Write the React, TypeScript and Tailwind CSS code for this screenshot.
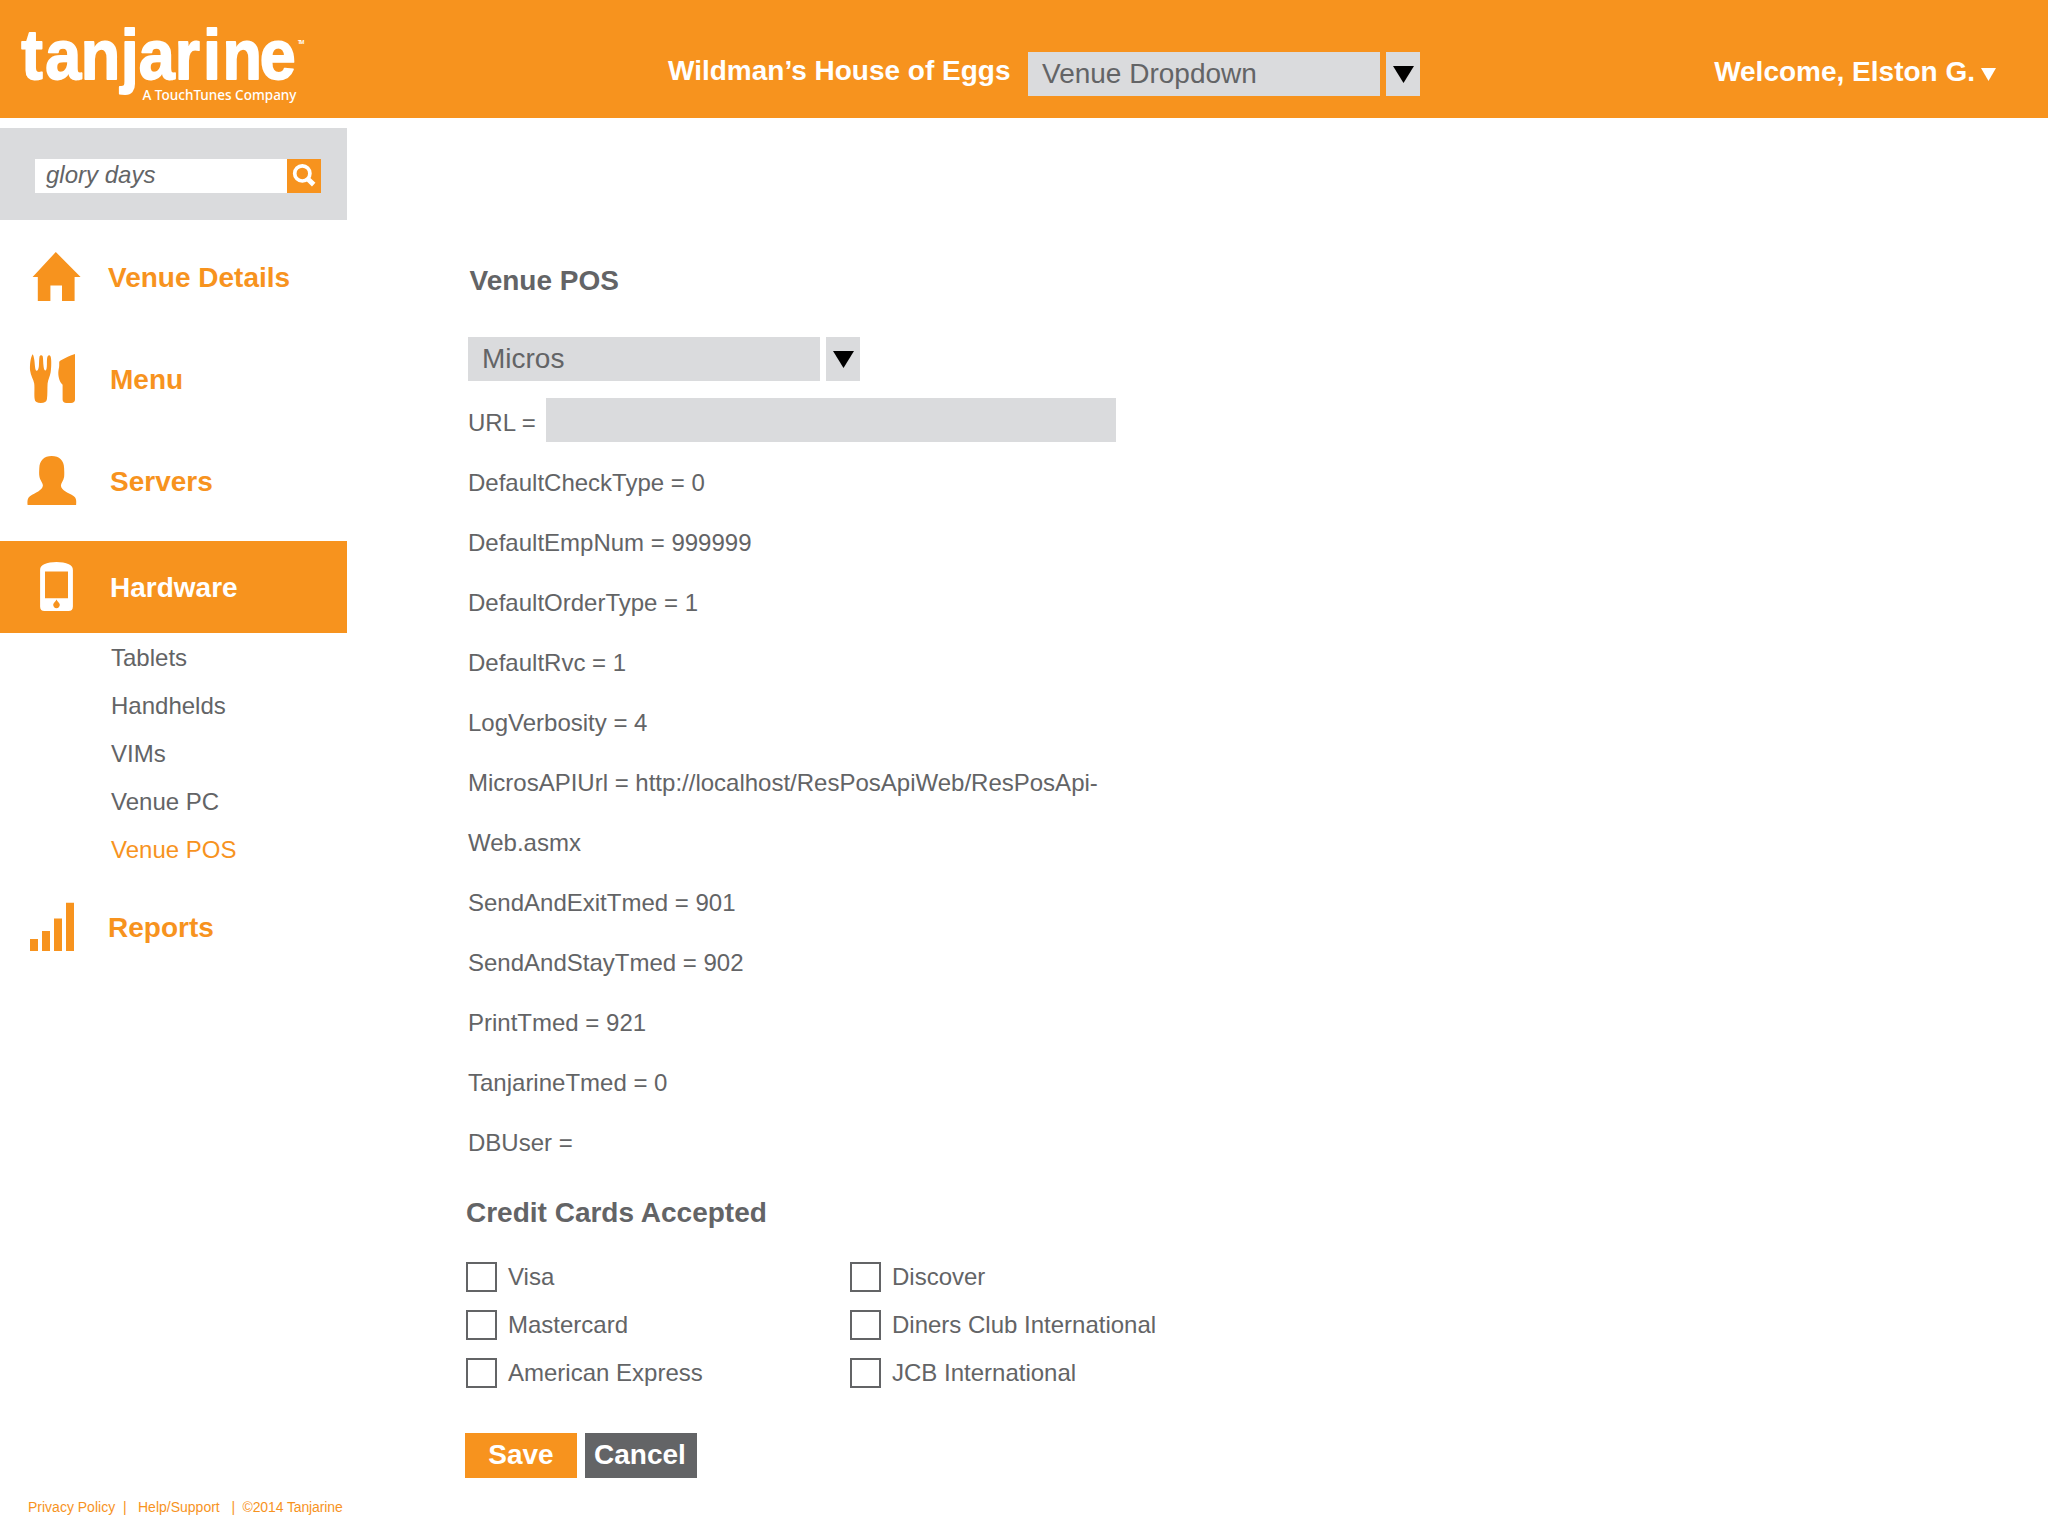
import React from 'react';

const ICON = 'mb-[2px] h-[49px] w-14 shrink-0';

const HouseIcon = () => (
    <svg viewBox="0 0 56 49" className={ICON} fill="currentColor">
        <path d="M29.8 0L54.6 25H48.6V49H36V33.5H24.4V49H11.8V25H6.6Z" />
    </svg>
);

const CutleryIcon = () => (
    <svg viewBox="0 0 56 49" className={ICON} fill="currentColor">
        <path d="M6.6 0.3C8 2 8.6 7 9 12.5C9.2 15 9.7 16.8 10.6 16.8C11.8 16.8 12.6 15 12.9 12C13.2 8 13 4.5 13.6 2.2C14 1 16.2 1 16.7 2.2C17.3 4.5 17 8.5 17.6 12.5C17.9 15.2 18.6 16.6 19.6 16.4C20.6 16 20.8 13.5 20.9 10.5C21 6.5 20.8 3.5 21.8 2C22.6 1 24 1.2 24.6 2.4C25.6 5 25.4 14 24.6 18.4C24 22 22 25.5 21.6 29.5C21.2 34 21.7 41 20.9 45.2C20.5 47.8 18.5 49 14.8 49C11 49 9 47.8 8.7 45.2C8 41 8.8 34 8.2 29.5C7.6 25.5 4.6 21.5 4.1 16.5C3.7 11.5 4.4 3.5 6.6 0.3Z" />
        <path d="M49 0V45.5C49 47.8 47.5 49 45 49H40.5C38 49 36.6 47.8 36.6 45.5V30.8C34.2 28.6 32.2 24 32.3 18.5C32.4 15.5 33.2 14 33.2 11.6V8.6C33.2 7.4 33.8 6.8 35 6.2C39.5 3.6 44 1.8 49 0Z" />
    </svg>
);

const PersonIcon = () => (
    <svg viewBox="0 0 56 49" className={ICON} fill="currentColor">
        <path d="M25.7 0C33.4 0 38 4.6 38.1 12C38.2 15 38.5 18 38.1 21C37.6 24.6 34.9 27 34.9 29.6C35 34.4 43 37.2 47.5 40C50.2 41.8 50.6 44.5 50.1 49H1.6C1.2 44.5 1.6 41.8 4.3 40C9 37 16.6 34.4 16.9 29.6C17 27 14.2 24.6 13.5 21C12.9 18 13.2 15 13.3 12C13.6 4.6 18 0 25.7 0Z" />
    </svg>
);

const PhoneIcon = () => (
    <svg viewBox="0 0 56 49" className={ICON} fill="currentColor">
        <path
            fillRule="evenodd"
            d="M14.1 8C14.1 5 15.6 3.5 18.2 2.3C21.5 0.8 26 0 30.5 0C35 0 39.5 0.8 42.8 2.3C45.4 3.5 46.9 5 46.9 8V44.5C46.9 47.5 45.4 49 42.5 49H18.5C15.6 49 14.1 47.5 14.1 44.5ZM19 9.4V36.2H42V9.4ZM30.5 37.4C29.7 39.4 27.2 40.8 27.2 42.7C27.2 44.6 28.7 46.2 30.5 46.2C32.3 46.2 33.8 44.6 33.8 42.7C33.8 40.8 31.3 39.4 30.5 37.4Z"
        />
    </svg>
);

const BarsIcon = () => (
    <svg viewBox="0 0 56 49" className={ICON} fill="currentColor">
        <path d="M4 37H12V49H4ZM16 29H24V49H16ZM28 16.5H36V49H28ZM40 0.7H48V49H40Z" />
    </svg>
);

const SearchIcon = () => (
    <svg viewBox="0 0 34 34" className="h-[34px] w-[34px]" fill="none" stroke="currentColor">
        <circle cx="15.3" cy="14.4" r="7.6" strokeWidth="3.7" />
        <path d="M20.6 19.8L26.7 25.6" strokeWidth="5" />
    </svg>
);

const Logo = () => (
    <svg viewBox="0 0 320 118" className="h-[118px] w-80 shrink-0" fill="#fff">
        <text
            transform="scale(0.91 1)"
            x="23.5 49.7 88.8 132.6 152.4 192.1 223 244.4 285.4"
            y="79.3"
            fontFamily="'Liberation Sans', Arial, sans-serif"
            fontWeight="700"
            fontSize="71"
            stroke="#fff"
            strokeWidth="1.8"
            strokeLinejoin="round"
        >
            tanjarine
        </text>
        <text
            x="142.5"
            y="100"
            fontFamily="'Noto Sans', sans-serif"
            fontWeight="500"
            fontSize="13.5"
            textLength="154"
            lengthAdjust="spacingAndGlyphs"
        >
            A TouchTunes Company
        </text>
        <text x="298" y="43.5" fontFamily="'Noto Sans', sans-serif" fontSize="5" textLength="6.5">TM</text>
    </svg>
);

const Select: React.FC<{ value: string }> = ({ value }) => (
    <div className="flex h-11 gap-[6px] text-[28px]">
        <div className="flex w-[352px] items-center bg-[#dadbdd] pl-[14px] text-[#636466]">{value}</div>
        <div className="flex w-[34px] items-center justify-center bg-[#dadbdd]">
            <svg viewBox="0 0 21 17" className="h-[17px] w-[21px]">
                <path d="M0 0H21L10.5 17Z" />
            </svg>
        </div>
    </div>
);

interface NavItemProps {
    icon: React.ReactNode;
    label: string;
    active?: boolean;
    className?: string;
}

const NavItem: React.FC<NavItemProps> = ({ icon, label, active, className = '' }) => (
    <div
        className={`flex h-[92px] items-center pl-[26px] text-[28px] font-bold ${
            active ? 'bg-[#f7931e] text-white' : 'text-[#f7931e]'
        } ${className}`}
    >
        {icon}
        <span className="pt-[2px]">{label}</span>
    </div>
);

const hardwareLinks = ['Tablets', 'Handhelds', 'VIMs', 'Venue PC', 'Venue POS'];

const settings = [
    'DefaultCheckType = 0',
    'DefaultEmpNum = 999999',
    'DefaultOrderType = 1',
    'DefaultRvc = 1',
    'LogVerbosity = 4',
    'MicrosAPIUrl = http://localhost/ResPosApiWeb/ResPosApi-',
    'Web.asmx',
    'SendAndExitTmed = 901',
    'SendAndStayTmed = 902',
    'PrintTmed = 921',
    'TanjarineTmed = 0',
    'DBUser =',
];

const cards = ['Visa', 'Discover', 'Mastercard', 'Diners Club International', 'American Express', 'JCB International'];

const Header = () => (
    <header className="flex h-[118px] shrink-0 items-start bg-[#f7931e] text-[28px] font-bold text-white">
        <Logo />
        <h1 className="mt-[55px] ml-[348px] w-[360px] leading-8 whitespace-nowrap">Wildman’s House of Eggs</h1>
        <div className="mt-[52px] font-normal">
            <Select value="Venue Dropdown" />
        </div>
        <div className="mt-[56px] mr-[52px] ml-auto flex gap-[6px] leading-8">
            <span>Welcome, Elston G.</span>
            <svg viewBox="0 0 15 13" className="mt-[12px] h-[13px] w-[15px]" fill="currentColor">
                <path d="M0 0H15L7.5 13Z" />
            </svg>
        </div>
    </header>
);

const Sidebar = () => (
    <aside className="flex w-[347px] shrink-0 flex-col pt-[10px]">
        <div className="flex h-[92px] bg-[#dadbdd] pt-[31px] pl-[35px]">
            <div className="h-[34px] w-[252px] bg-white pl-[11px] text-2xl leading-[32px] italic">glory days</div>
            <button className="h-[34px] w-[34px] bg-[#f7931e] text-white">
                <SearchIcon />
            </button>
        </div>

        <nav className="mt-[11px]">
            <NavItem icon={<HouseIcon />} label="Venue Details" className="gap-[26px]" />
            <NavItem icon={<CutleryIcon />} label="Menu" className="mt-[10px] gap-[28px]" />
            <NavItem icon={<PersonIcon />} label="Servers" className="mt-[10px] gap-[28px]" />
            <NavItem icon={<PhoneIcon />} label="Hardware" active className="mt-[14px] gap-[28px]" />
            <ul className="pt-px pl-[111px] text-2xl leading-[48px]">
                {hardwareLinks.map((link) => (
                    <li key={link} className={link === 'Venue POS' ? 'text-[#f7931e]' : ''}>{link}</li>
                ))}
            </ul>
            <NavItem icon={<BarsIcon />} label="Reports" className="mt-[7px] gap-[26px]" />
        </nav>

        <footer className="mt-auto mb-[19px] flex pl-7 text-sm whitespace-nowrap text-[#f7931e]">
            <span className="w-[95px]">Privacy Policy</span>
            <span className="w-[15px]">|</span>
            <span className="w-[93.5px]">Help/Support</span>
            <span className="w-[11px]">|</span>
            <span className="tracking-[-0.12px]">©2014 Tanjarine</span>
        </footer>
    </aside>
);

export default function App() {
    return (
        <div className="flex h-[1536px] w-[2048px] flex-col overflow-hidden bg-white font-['Liberation_Sans',Arial,sans-serif] text-[#636466]">
            <Header />
            <div className="flex flex-1">
                <Sidebar />
                <main className="pt-[147px] pl-[121px]">
                    <h2 className="ml-[1.5px] text-[28px] leading-8 font-bold">Venue POS</h2>
                    <div className="mt-[40px]">
                        <Select value="Micros" />
                    </div>

                    <div className="mt-[17px] flex h-11 text-2xl">
                        <label className="w-[78px] pt-[9px] leading-8">URL =</label>
                        <div className="w-[570px] bg-[#dadbdd]" />
                    </div>

                    <div className="mt-[11px] text-2xl leading-[60px] whitespace-nowrap">
                        {settings.map((line) => (
                            <div key={line}>{line}</div>
                        ))}
                    </div>

                    <div className="-ml-[2px]">
                        <h2 className="mt-[24px] text-[28px] leading-8 font-bold">Credit Cards Accepted</h2>
                        <div className="mt-[33px] grid grid-cols-[384px_384px] gap-y-[18px] text-2xl">
                            {cards.map((card) => (
                                <label key={card} className="flex h-[30px] items-center gap-[11px]">
                                    <span className="h-[30px] w-[31px] border-2 border-[#636466]" />
                                    <span className="leading-[30px]">{card}</span>
                                </label>
                            ))}
                        </div>
                        <div className="mt-[45px] -ml-px flex gap-2 text-[28px] font-bold text-white">
                            <button className="h-[45px] w-28 bg-[#f7931e] pb-px">Save</button>
                            <button className="h-[45px] w-28 bg-[#636466] pr-[2px] pb-px">Cancel</button>
                        </div>
                    </div>
                </main>
            </div>
        </div>
    );
}
